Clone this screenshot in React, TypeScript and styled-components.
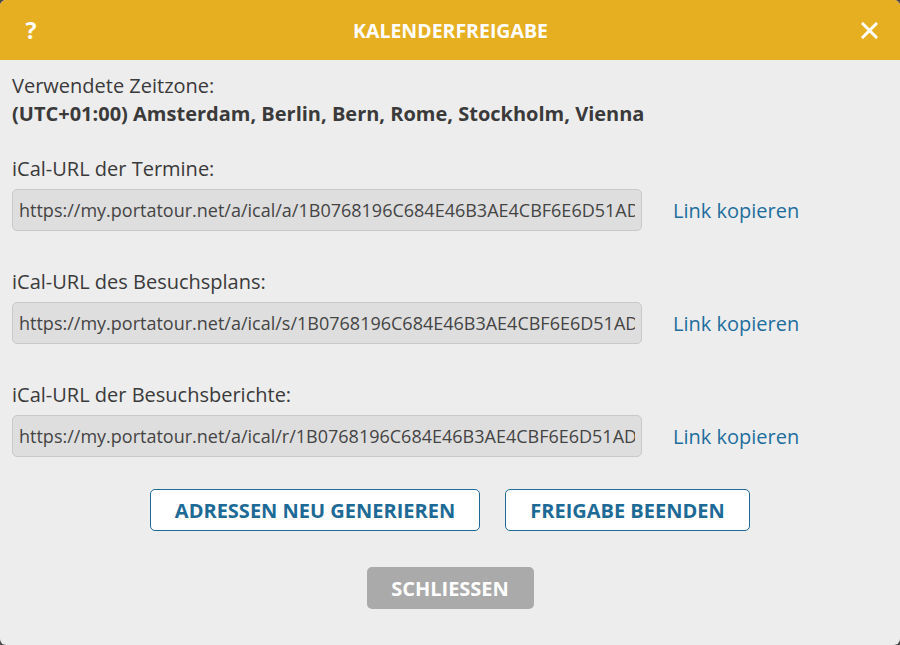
import React from 'react'
import styled, { createGlobalStyle } from 'styled-components'

const GlobalStyle = createGlobalStyle`
  html, body {
    margin: 0;
    padding: 0;
    background: #4a4a4a;
  }
  body {
    font-family: 'Open Sans', 'Noto Sans', sans-serif;
  }
`

const Dialog = styled.div`
  width: 900px;
  height: 645px;
  background: #ededed;
  border-radius: 6px;
  overflow: hidden;
  display: flex;
  flex-direction: column;
`

const Header = styled.div`
  height: 60px;
  background: #e6af22;
  display: flex;
  align-items: center;
  justify-content: space-between;
  padding: 0 20px 0 21px;
  color: #fff;
`

const HeaderIcon = styled.button`
  background: none;
  border: none;
  padding: 0;
  width: 20px;
  color: #fff;
  font-family: 'Open Sans', sans-serif;
  font-weight: 700;
  font-size: 23px;
  display: flex;
  align-items: center;
  justify-content: center;
  cursor: pointer;
`

const Title = styled.div`
  font-weight: 700;
  font-size: 19.5px;
`

const Body = styled.div`
  padding: 13px 12px 0;
  color: #3a3a3a;
  font-size: 20px;
  display: flex;
  flex-direction: column;
`

const Label = styled.div`
  line-height: 26px;
`

const Strong = styled.div`
  font-weight: 700;
  line-height: 26px;
  margin-top: 2px;
`

const Section = styled.div<{ $top: number }>`
  margin-top: ${({ $top }) => $top}px;
`

const UrlRow = styled.div`
  display: flex;
  align-items: center;
  margin-top: 7px;
`

const UrlInput = styled.input`
  width: 630px;
  height: 42px;
  box-sizing: border-box;
  background: #dedede;
  border: 1px solid #c9c9c9;
  border-radius: 5px;
  padding: 0 6px;
  font-family: 'Open Sans', sans-serif;
  font-size: 18px;
  color: #444;
  outline: none;
`

const CopyLink = styled.a`
  margin-left: 31px;
  color: #1d6e9d;
  font-size: 20px;
  text-decoration: none;
  cursor: pointer;
`

const ButtonRow = styled.div`
  display: flex;
  justify-content: center;
  gap: 25px;
  margin-top: 32px;
`

const OutlineButton = styled.button<{ $width: number }>`
  width: ${({ $width }) => $width}px;
  height: 42px;
  background: #fff;
  border: 1px solid #1d6a96;
  border-radius: 5px;
  color: #1d6a96;
  font-family: 'Open Sans', sans-serif;
  font-weight: 700;
  font-size: 20px;
  cursor: pointer;
`

const CloseRow = styled.div`
  display: flex;
  justify-content: center;
  margin-top: 36px;
`

const GreyButton = styled.button`
  width: 167px;
  height: 42px;
  background: #aaaaaa;
  border: none;
  border-radius: 5px;
  color: #fff;
  font-family: 'Open Sans', sans-serif;
  font-weight: 700;
  font-size: 20px;
  cursor: pointer;
`

const urls = [
  { label: 'iCal-URL der Termine:', url: 'https://my.portatour.net/a/ical/a/1B0768196C684E46B3AE4CBF6E6D51AD' },
  { label: 'iCal-URL des Besuchsplans:', url: 'https://my.portatour.net/a/ical/s/1B0768196C684E46B3AE4CBF6E6D51AD' },
  { label: 'iCal-URL der Besuchsberichte:', url: 'https://my.portatour.net/a/ical/r/1B0768196C684E46B3AE4CBF6E6D51AD' },
]

const CloseIcon = () => (
  <svg width="17" height="17" viewBox="0 0 17 17">
    <path d="M2 2 L15 15 M15 2 L2 15" stroke="#fff" strokeWidth="3" strokeLinecap="square" />
  </svg>
)

const App = () => {
  return (
    <Dialog>
      <GlobalStyle />
      <Header>
        <HeaderIcon>?</HeaderIcon>
        <Title>KALENDERFREIGABE</Title>
        <HeaderIcon>
          <CloseIcon />
        </HeaderIcon>
      </Header>
      <Body>
        <Label>Verwendete Zeitzone:</Label>
        <Strong>(UTC+01:00) Amsterdam, Berlin, Bern, Rome, Stockholm, Vienna</Strong>
        {urls.map((item, i) => (
          <Section key={item.label} $top={i === 0 ? 29 : 38}>
            <Label>{item.label}</Label>
            <UrlRow>
              <UrlInput readOnly value={item.url} />
              <CopyLink>Link kopieren</CopyLink>
            </UrlRow>
          </Section>
        ))}
        <ButtonRow>
          <OutlineButton $width={330}>ADRESSEN NEU GENERIEREN</OutlineButton>
          <OutlineButton $width={245}>FREIGABE BEENDEN</OutlineButton>
        </ButtonRow>
        <CloseRow>
          <GreyButton>SCHLIESSEN</GreyButton>
        </CloseRow>
      </Body>
    </Dialog>
  )
}

export default App
